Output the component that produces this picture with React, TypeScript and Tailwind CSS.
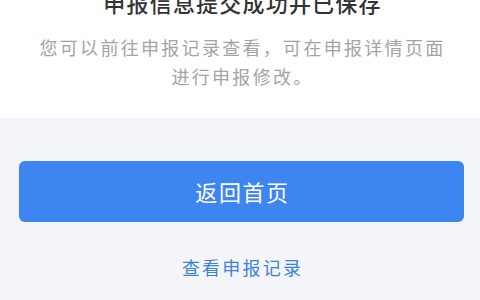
import React from "react";

export default function App() {
  return (
    <div className="w-[480px] h-[300px] overflow-hidden bg-[#f4f5f9] font-['Noto_Sans_CJK_SC','Noto_Sans',sans-serif]">
      <div className="bg-white pl-[5px] pb-[28px] flex flex-col items-center">
        <div className="-mt-[14px] text-[22px] leading-[32px] font-medium tracking-[1.2px] text-[#333333] whitespace-nowrap">
          申报信息提交成功并已保存
        </div>
        <p className="mt-[15px] text-[18px] leading-[28.5px] tracking-[2.3px] text-[#a3a3a3] text-center whitespace-nowrap">
          您可以前往申报记录查看，可在申报详情页面
          <br />
          进行申报修改。
        </p>
      </div>
      <div className="pl-[19px] pr-[16px] pt-[43px]">
        <button className="w-full h-[61px] rounded-[6px] bg-[#3d85f0] text-white text-[22px] tracking-[1.6px] pl-[2px] flex items-center justify-center">
          返回首页
        </button>
      </div>
      <div className="mt-[31px] pl-[5px] text-center text-[18px] leading-[28px] tracking-[2.2px] text-[#3f80dc]">
        查看申报记录
      </div>
    </div>
  );
}
